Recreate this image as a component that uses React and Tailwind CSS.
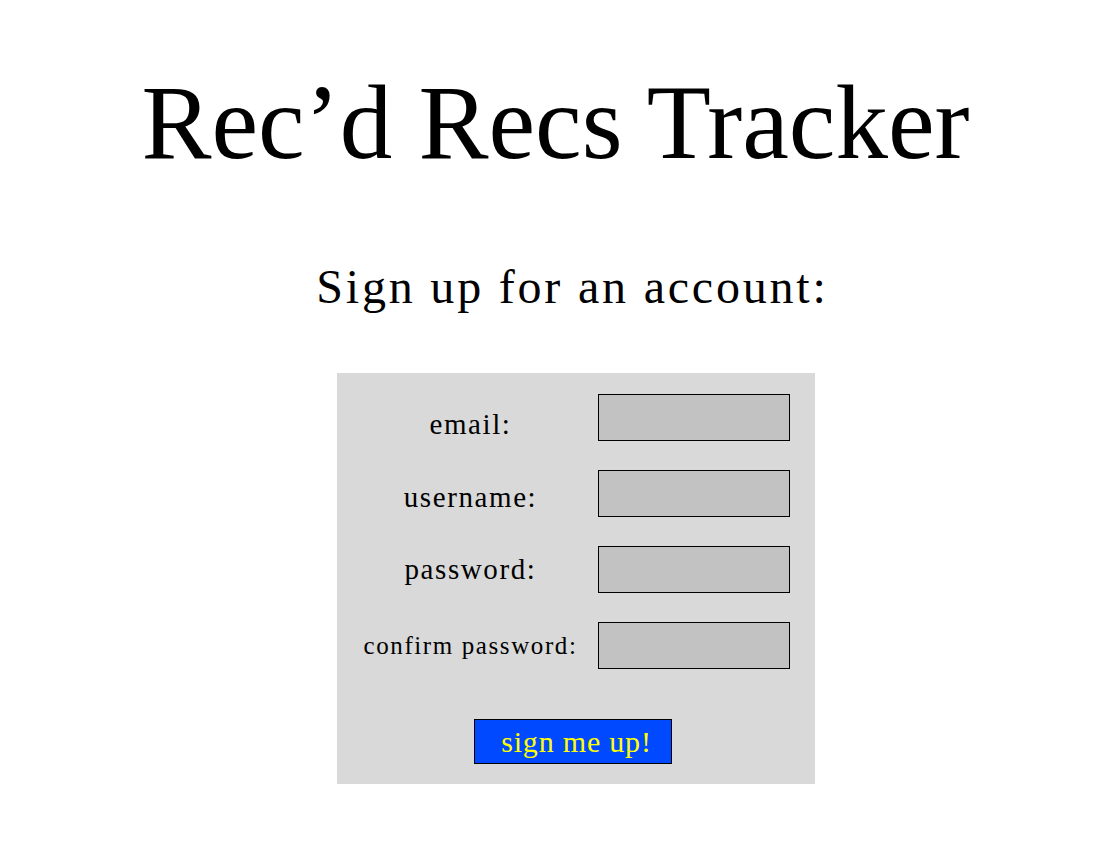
import React from "react";

const serif = { fontFamily: '"Liberation Serif", "Times New Roman", serif' };

// label sits at its own offset from the top of the input, as in the mockup
const fields = [
  { id: "email", label: "email:", type: "email", labelClass: "mt-[13px] text-[29px] leading-[34px]" },
  { id: "username", label: "username:", type: "text", labelClass: "mt-[10px] text-[29px] leading-[34px]" },
  { id: "password", label: "password:", type: "password", labelClass: "mt-[6px] text-[29px] leading-[34px]" },
  { id: "confirm", label: "confirm password:", type: "password", labelClass: "mt-[9px] text-[25px] leading-[30px]" },
];

export default function App() {
  return (
    <div className="min-h-[851px] bg-white text-black" style={serif}>
      <div className="flex flex-col items-center pt-[70px]">
        <h1 className="text-[105px] leading-none font-normal">Rec’d Recs Tracker</h1>

        <div className="flex flex-col items-center pl-[42px] pt-[88px]">
          <h2 className="ml-[-8px] text-[48px] leading-none font-normal tracking-[2.8px]">
            Sign up for an account:
          </h2>

          <form
            className="mt-[62px] w-[478px] bg-[#d9d9d9] pl-[13px] pr-[25px] pt-[21px] pb-[20px]"
            onSubmit={(e) => e.preventDefault()}
          >
            <div className="grid grid-cols-[240px_192px] gap-x-[8px] gap-y-[29px] items-start">
              {fields.map((f) => (
                <React.Fragment key={f.id}>
                  <label
                    htmlFor={f.id}
                    className={`text-center tracking-[1.6px] ${f.labelClass}`}
                  >
                    {f.label}
                  </label>
                  <input
                    id={f.id}
                    type={f.type}
                    className="h-[47px] w-[192px] border border-black bg-[#c2c2c2] px-2 outline-none"
                  />
                </React.Fragment>
              ))}
            </div>

            <div className="mt-[50px] flex justify-center pl-[6px]">
              <button
                type="submit"
                className="flex h-[45px] w-[198px] items-center justify-center border border-black bg-[#0049ff] pl-[6px] text-[30px] leading-none tracking-[0.8px] text-[#ffff00]"
              >
                sign me up!
              </button>
            </div>
          </form>
        </div>
      </div>
    </div>
  );
}
